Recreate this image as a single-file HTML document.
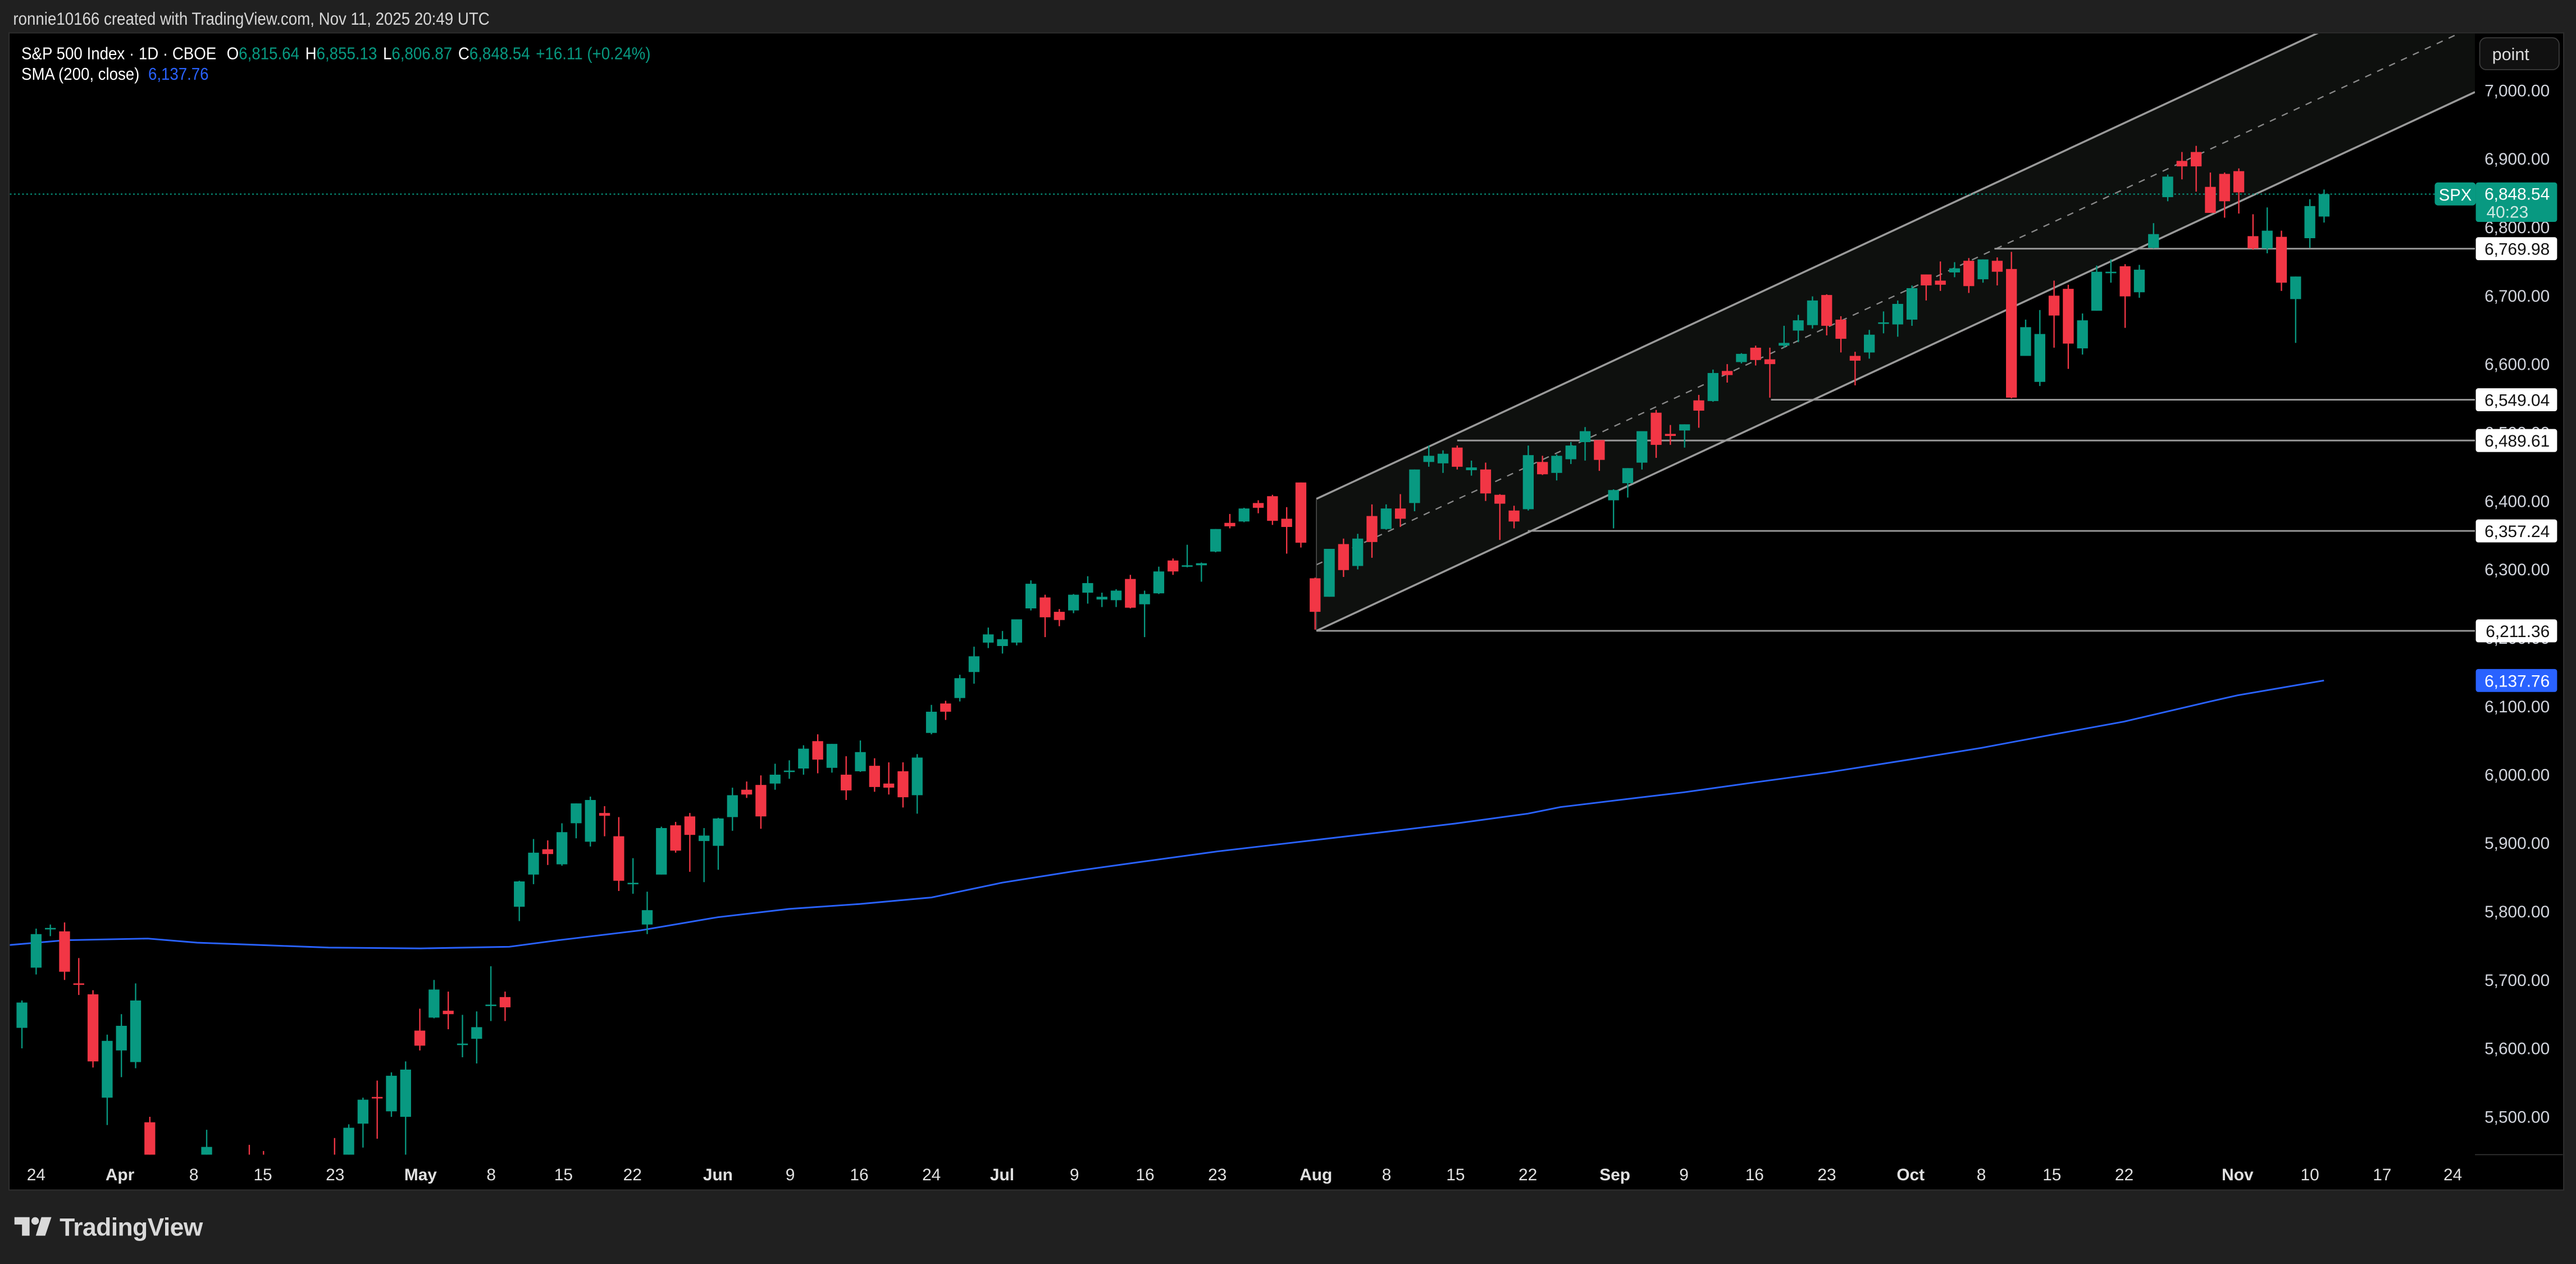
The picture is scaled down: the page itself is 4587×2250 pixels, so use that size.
<!DOCTYPE html>
<html><head><meta charset="utf-8">
<style>
html,body{margin:0;padding:0;background:#202020;width:4587px;height:2250px;overflow:hidden;}
svg{display:block;position:absolute;left:0;top:0;}
text{font-family:"Liberation Sans",Arial,sans-serif;}
</style></head>
<body>
<svg id="s" width="4587" height="2250" viewBox="0 0 1568 769" preserveAspectRatio="none" xmlns="http://www.w3.org/2000/svg">
<rect x="0" y="0" width="1568" height="769" fill="#202020"/>
<text x="8" y="15" font-size="10.6" fill="#d6d6d6" textLength="290" lengthAdjust="spacingAndGlyphs">ronnie10166 created with TradingView.com, Nov 11, 2025 20:49 UTC</text>
<rect x="5.5" y="20" width="1555" height="704" fill="#000" stroke="#2e2e2e" stroke-width="0.7"/>
<defs><clipPath id="cp"><rect x="6" y="20.5" width="1500.5" height="682"/></clipPath></defs>
<g id="pane" clip-path="url(#cp)">
 <polygon points="801.3,303.5 1506.5,-24.4 1506.5,56 801.3,383.8" fill="#0e100e"/>
 <line x1="801.3" y1="303.5" x2="1506.5" y2="-24.4" stroke="#9a9a9a" stroke-width="1.2"/>
 <line x1="801.3" y1="383.8" x2="1506.5" y2="56" stroke="#9a9a9a" stroke-width="1.2"/>
 <line x1="801.3" y1="343.6" x2="1506.5" y2="15.8" stroke="#8a8a8a" stroke-width="0.8" stroke-dasharray="4,4"/>
 <line x1="801.3" y1="303.5" x2="801.3" y2="383.8" stroke="#555" stroke-width="0.5"/>
 <line x1="1214" y1="151.3" x2="1506.5" y2="151.3" stroke="#9a9a9a" stroke-width="1"/>
 <line x1="1078" y1="243.2" x2="1506.5" y2="243.2" stroke="#9a9a9a" stroke-width="1"/>
 <line x1="887" y1="268" x2="1506.5" y2="268" stroke="#9a9a9a" stroke-width="1"/>
 <line x1="930" y1="323" x2="1506.5" y2="323" stroke="#9a9a9a" stroke-width="1"/>
 <line x1="801.3" y1="383.8" x2="1506.5" y2="383.8" stroke="#9a9a9a" stroke-width="1"/>
 <line x1="6" y1="118.1" x2="1506.5" y2="118.1" stroke="#089981" stroke-width="0.7" stroke-dasharray="1,1.5"/>
 <g id="sma"></g>
 <g id="candles"></g>
</g>
<text x="13" y="36" font-size="10.4" fill="#fff" textLength="383" lengthAdjust="spacingAndGlyphs">S&amp;P 500 Index · 1D · CBOE <tspan dx="4">O</tspan><tspan fill="#089981">6,815.64</tspan><tspan dx="4">H</tspan><tspan fill="#089981">6,855.13</tspan><tspan dx="4">L</tspan><tspan fill="#089981">6,806.87</tspan><tspan dx="4">C</tspan><tspan fill="#089981">6,848.54</tspan><tspan dx="4" fill="#089981">+16.11 (+0.24%)</tspan></text>
<text x="13" y="48.5" font-size="10.4" fill="#fff" textLength="114" lengthAdjust="spacingAndGlyphs">SMA (200, close) <tspan dx="3" fill="#2962ff">6,137.76</tspan></text>
<g font-size="10.2" fill="#d1d4dc" text-anchor="end" id="axis"></g>
<rect x="1509.4" y="23" width="48.3" height="19.4" rx="4" fill="#111" stroke="#3c3c3c" stroke-width="0.6"/>
<text x="1517" y="36.5" font-size="10.4" fill="#ddd">point</text>
<rect x="1482" y="111" width="25" height="14" rx="2" fill="#089981"/>
<text x="1494.5" y="122" font-size="10" fill="#fff" text-anchor="middle">SPX</text>
<rect x="1507" y="111" width="49.5" height="24" rx="1.5" fill="#089981"/>
<text x="1552" y="121.5" font-size="10.2" fill="#fff" text-anchor="end">6,848.54</text>
<text x="1513.5" y="132.5" font-size="10.2" fill="#cfe9e3">40:23</text>
<g font-size="10.2" fill="#111" text-anchor="end">
 <rect x="1507" y="144.3" width="49.5" height="14" rx="1.5" fill="#fff"/><text x="1552" y="155">6,769.98</text>
 <rect x="1507" y="236.2" width="49.5" height="14" rx="1.5" fill="#fff"/><text x="1552" y="247">6,549.04</text>
 <rect x="1507" y="261" width="49.5" height="14" rx="1.5" fill="#fff"/><text x="1552" y="271.8">6,489.61</text>
 <rect x="1507" y="316" width="49.5" height="14" rx="1.5" fill="#fff"/><text x="1552" y="326.8">6,357.24</text>
 <rect x="1507" y="376.8" width="49.5" height="14" rx="1.5" fill="#fff"/><text x="1552" y="387.6">6,211.36</text>
 <rect x="1507" y="407" width="49.5" height="14" rx="1.5" fill="#2962ff"/><text x="1552" y="417.8" fill="#fff">6,137.76</text>
</g>
<line x1="1506.5" y1="702.5" x2="1560" y2="702.5" stroke="#333" stroke-width="0.6"/>
<g font-size="10.2" fill="#e0e0e0" text-anchor="middle">
<text x="22" y="718">24</text><text x="73" y="718" font-weight="bold">Apr</text><text x="118" y="718">8</text><text x="160" y="718">15</text><text x="204" y="718">23</text><text x="256" y="718" font-weight="bold">May</text><text x="299" y="718">8</text><text x="343" y="718">15</text><text x="385" y="718">22</text><text x="437" y="718" font-weight="bold">Jun</text><text x="481" y="718">9</text><text x="523" y="718">16</text><text x="567" y="718">24</text><text x="610" y="718" font-weight="bold">Jul</text><text x="654" y="718">9</text><text x="697" y="718">16</text><text x="741" y="718">23</text><text x="801" y="718" font-weight="bold">Aug</text><text x="844" y="718">8</text><text x="886" y="718">15</text><text x="930" y="718">22</text><text x="983" y="718" font-weight="bold">Sep</text><text x="1025" y="718">9</text><text x="1068" y="718">16</text><text x="1112" y="718">23</text><text x="1163" y="718" font-weight="bold">Oct</text><text x="1206" y="718">8</text><text x="1249" y="718">15</text><text x="1293" y="718">22</text><text x="1362" y="718" font-weight="bold">Nov</text><text x="1406" y="718">10</text><text x="1450" y="718">17</text><text x="1493" y="718">24</text>
</g>
<g fill="#d9d9d9">
 <path d="M8.8,740.5 H18 V751.8 H13.4 V745 H8.8 Z"/>
 <circle cx="21.4" cy="742.8" r="2.3"/>
 <path d="M25.2,740.5 H31.3 L27.5,751.8 H21.8 Z"/>
</g>
<text x="36.3" y="751.8" font-size="15.2" font-weight="bold" fill="#d9d9d9" letter-spacing="-0.2">TradingView</text>
</svg>
<script>
(function(){
var NS="http://www.w3.org/2000/svg";
function Y(p){return 55+(7000-p)*0.4163;}
function X(i){return 22+i*8.65;}
var ax=document.getElementById('axis');
for(var p=7000;p>=5500;p-=100){var t=document.createElementNS(NS,'text');t.setAttribute('x','1552');t.setAttribute('y',(Y(p)+3.6).toFixed(1));var s=String(p);t.textContent=s.charAt(0)+','+s.slice(1)+'.00';ax.appendChild(t);}
var D=[
[5630,5670,5600,5667],[5718,5775,5708,5767],[5775,5781,5764,5776],[5771,5784,5700,5712],[5695,5732,5678,5693],[5679,5685,5572,5581],
[5528,5620,5488,5611],[5597,5650,5558,5633],[5580,5695,5571,5670],[5492,5500,5390,5396],[5292,5292,5069,5074],
[4953,5246,4835,5062],[5193,5267,4910,4982],[4965,5481,4950,5456],[5353,5353,5115,5268],[5256,5381,5220,5363],
[5441,5459,5358,5405],[5411,5450,5386,5396],[5335,5367,5220,5275],[5305,5328,5255,5282],
[5232,5232,5101,5158],[5207,5309,5207,5287],[5395,5469,5356,5375],[5381,5489,5371,5484],[5490,5528,5455,5525],
[5529,5553,5468,5528],[5508,5565,5500,5560],[5500,5581,5433,5569],[5626,5658,5597,5604],[5645,5700,5644,5686],
[5655,5683,5628,5650],[5605,5649,5587,5607],[5614,5654,5578,5631],[5663,5720,5640,5664],[5675,5683,5640,5660],
[5807,5845,5786,5844],[5854,5906,5840,5886],[5891,5904,5868,5884],[5869,5929,5867,5916],[5929,5958,5907,5958],
[5902,5968,5895,5963],[5944,5954,5910,5940],[5910,5938,5830,5845],[5842,5878,5826,5842],[5781,5829,5767,5802],
[5854,5924,5854,5922],[5926,5931,5886,5889],[5939,5944,5858,5912],[5903,5922,5843,5911],
[5896,5937,5861,5936],[5938,5981,5918,5970],[5978,5990,5966,5971],[5985,5999,5921,5939],[5987,6016,5978,6000],
[6005,6021,5994,6006],[6009,6043,6000,6038],[6049,6059,6002,6022],[6010,6045,6003,6045],[6000,6027,5963,5977],
[6005,6050,6004,6033],[6013,6024,5975,5982],[5987,6018,5971,5981],[6005,6018,5952,5967],
[5970,6030,5943,6025],[6061,6102,6059,6092],[6104,6108,6080,6092],[6112,6146,6107,6141],[6150,6187,6133,6173],
[6193,6215,6185,6205],[6188,6210,6177,6198],[6193,6227,6189,6227],[6243,6284,6240,6279],
[6259,6263,6201,6230],[6238,6242,6217,6226],[6240,6264,6236,6263],[6266,6290,6250,6280],[6256,6266,6245,6260],
[6255,6271,6245,6269],[6286,6292,6243,6244],[6249,6269,6201,6264],[6265,6304,6264,6297],[6313,6316,6292,6297],
[6304,6336,6303,6306],[6306,6310,6282,6309],[6326,6359,6325,6359],[6368,6381,6360,6363],[6370,6390,6369,6389],
[6397,6401,6382,6390],[6407,6409,6365,6371],[6374,6391,6323,6362],[6427,6427,6332,6339],[6287,6288,6212,6238],
[6260,6330,6260,6330],[6337,6345,6289,6299],[6305,6352,6300,6345],[6378,6395,6317,6340],[6359,6395,6358,6389],
[6389,6410,6362,6374],[6397,6446,6385,6446],[6457,6481,6450,6466],[6455,6474,6441,6469],[6478,6481,6446,6450],
[6445,6459,6437,6449],[6446,6456,6400,6411],[6409,6410,6343,6396],[6386,6393,6360,6370],[6388,6481,6386,6467],
[6457,6466,6438,6439],[6441,6468,6430,6466],[6461,6486,6454,6481],[6486,6508,6459,6502],[6489,6489,6444,6460],
[6401,6417,6360,6416],[6426,6448,6405,6448],[6456,6502,6446,6502],[6529,6533,6463,6482],
[6498,6511,6482,6495],[6503,6512,6478,6512],[6547,6555,6507,6532],[6546,6592,6545,6587],[6590,6600,6573,6584],
[6603,6616,6601,6615],[6624,6627,6598,6606],[6607,6624,6551,6600],[6627,6656,6624,6631],[6649,6672,6632,6664],
[6657,6699,6652,6693],[6701,6702,6642,6656],[6665,6670,6617,6637],[6612,6618,6569,6605],[6617,6650,6608,6643],
[6661,6677,6645,6661],[6658,6693,6640,6688],[6665,6715,6656,6711],[6731,6731,6693,6715],[6722,6750,6707,6716],
[6734,6749,6727,6740],[6751,6755,6704,6714],[6724,6753,6719,6753],[6751,6756,6715,6735],[6739,6764,6550,6551],
[6612,6665,6612,6654],[6574,6679,6568,6644],[6700,6722,6624,6671],[6710,6716,6593,6630],[6623,6674,6614,6664],
[6678,6744,6678,6735],[6735,6753,6719,6735],[6743,6746,6653,6699],[6705,6745,6697,6738],[6770,6806,6769,6790],
[6844,6877,6838,6874],[6897,6910,6870,6889],[6910,6919,6852,6889],[6859,6880,6821,6821],[6878,6880,6814,6838],
[6882,6886,6820,6851],[6787,6819,6767,6769],[6769,6829,6762,6795],[6786,6795,6707,6719],[6695,6728,6631,6728],
[6784,6841,6770,6831],[6815.64,6855.13,6806.87,6848.54]
];
var g=document.getElementById('candles'),h='';
for(var k=0;k<D.length;k++){
 var i=k-1,d=D[k],x=X(i),o=d[0],hi=d[1],lo=d[2],c=d[3];
 var col=c>=o?'#089981':'#f23645';
 var top=Y(Math.max(o,c)),bot=Y(Math.min(o,c)),bh=Math.max(bot-top,0.9);
 h+='<line x1="'+x.toFixed(2)+'" y1="'+Y(hi).toFixed(2)+'" x2="'+x.toFixed(2)+'" y2="'+Y(lo).toFixed(2)+'" stroke="'+col+'" stroke-width="0.8"/>';
 h+='<rect x="'+(x-3.3).toFixed(2)+'" y="'+top.toFixed(2)+'" width="6.6" height="'+bh.toFixed(2)+'" fill="'+col+'"/>';
}
g.innerHTML=h;
var S=[[5,575],[40,572],[90,571],[120,573.5],[160,575],[200,576.5],[256,577],[310,576],[340,572],[390,566],[437,558],[480,553],[523,550],[567,546],[610,537],[654,530],[697,524],[741,518],[801,511],[844,506],[886,501],[930,495],[950,491],[983,487],[1025,482],[1068,476],[1112,470],[1163,462],[1206,455],[1249,447],[1293,439],[1340,428],[1362,423],[1414.6,414]];
var pts=S.map(function(p){return p[0]+','+p[1];}).join(' ');
document.getElementById('sma').innerHTML='<polyline points="'+pts+'" fill="none" stroke="#2962ff" stroke-width="1"/>';
})();
</script>
</body></html>
